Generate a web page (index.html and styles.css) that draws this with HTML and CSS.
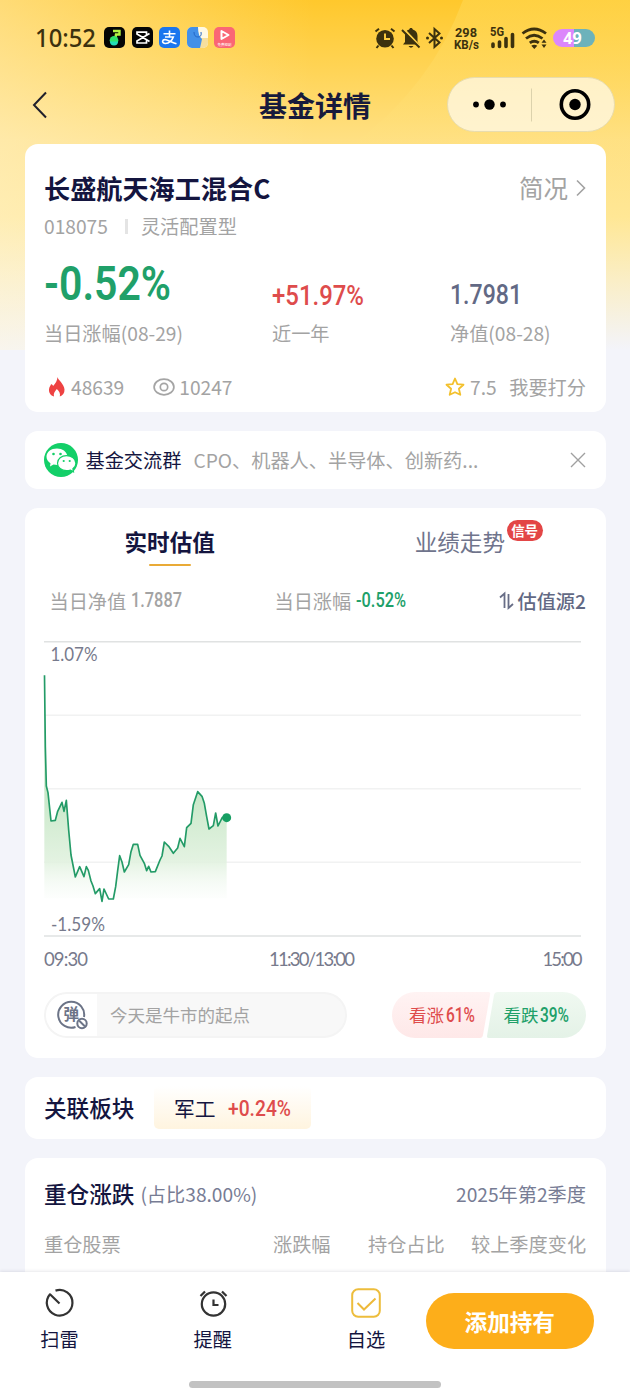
FILE: index.html
```
<!DOCTYPE html>
<html lang="zh-CN">
<head>
<meta charset="utf-8">
<title>基金详情</title>
<link rel="stylesheet" href="styles.css">
</head>
<body>
<svg class="backdrop" viewBox="0 0 630 350" width="630" height="350">
  <defs>
    <linearGradient id="bgv" x1="0" y1="0" x2="0" y2="1">
      <stop offset="0" stop-color="#ffc82c"/><stop offset=".2" stop-color="#ffd456"/><stop offset=".4" stop-color="#ffe083"/><stop offset=".62" stop-color="#ffe795"/><stop offset=".8" stop-color="#faeec6"/><stop offset="1" stop-color="#f3f4fa"/>
    </linearGradient>
    <linearGradient id="bgl" x1="0" y1="0" x2="1" y2="0">
      <stop offset="0" stop-color="#fff6dd" stop-opacity=".42"/><stop offset=".5" stop-color="#fff6dd" stop-opacity="0"/>
    </linearGradient>
    <linearGradient id="bgc" x1="0" y1="0" x2="0" y2="1">
      <stop offset="0" stop-color="#ffe16a" stop-opacity=".36"/><stop offset="1" stop-color="#ffe58a" stop-opacity=".05"/>
    </linearGradient>
  </defs>
  <rect width="630" height="350" fill="url(#bgv)"/>
  <rect width="630" height="350" fill="url(#bgl)"/>
  <path d="M463 0 Q432 85 355 143 V200 H630 V0Z" fill="url(#bgc)"/>
</svg>

<header class="status">
  <svg class="clock" width="62" height="28"><text x="0" y="22.500" textLength="61" lengthAdjust="spacingAndGlyphs">10:52</text></svg>
  <div class="apps">
    <svg viewBox="0 0 21 21"><rect width="21" height="21" rx="5" fill="#050505"/><path d="M9 4h6.500v3.500H12l-.5 3" fill="none" stroke="#b4f442" stroke-width="2.400"/><circle cx="10" cy="13.300" r="4.300" fill="#2ee36b"/><path d="M6 14.500h8a4 4 0 0 1-8 0z" fill="#22dcb8"/></svg>
    <svg viewBox="0 0 21 21"><rect width="21" height="21" rx="5" fill="#050505"/><path d="M17.500 6.500 5 14v2h9.500v-2.500M17.500 14.500 5 7V5.200h9.500v2.500" fill="none" stroke="#fff" stroke-width="1.700"/></svg>
    <svg viewBox="0 0 21 21"><rect width="21" height="21" rx="5" fill="#1b76ee"/><path d="M4.500 6.700h12M10.500 3.500V10M6 10h8.300c-1 3-4 6.500-7.800 6.500-4.500-.3-3.300-4.500.5-3.700 3 .7 6 2.500 10.500 4" fill="none" stroke="#fff" stroke-width="1.600"/></svg>
    <svg viewBox="0 0 21 21"><rect width="21" height="21" rx="5" fill="#fff9e4"/><path d="M13 11h8v5a5 5 0 0 1-5 5h-3z" fill="#f6df9e"/><path d="M5 0h6q0 9 4 12-1 5-2 9H5a5 5 0 0 1-5-5V5a5 5 0 0 1 5-5z" fill="#4390e8"/><path d="M7 5q0 5 4 5t3-5" fill="none" stroke="#2467c8" stroke-width="1"/></svg>
    <svg viewBox="0 0 21 21"><rect width="21" height="21" rx="5" fill="#fa6675"/><path d="M7.500 4v8l7-4z" fill="none" stroke="#fff" stroke-width="2" stroke-linejoin="round"/><text class="app-caption" x="3.500" y="19">免费短剧</text></svg>
  </div>
  <div class="signals">
    <svg width="22" height="22" viewBox="0 0 22 22"><circle cx="11" cy="11.800" r="8.800" fill="#3c310e"/><path d="M11 6.500V12h5" fill="none" stroke="#ffce40" stroke-width="1.900"/><path d="M1.500 4.500 5 1.700M20.500 4.500 17 1.700M4.500 18.500l-2 2.500M17.500 18.500l2 2.500" stroke="#3c310e" stroke-width="2"/></svg>
    <svg width="20" height="22" viewBox="0 0 20 22"><path d="M10 1c1 0 1.700.7 1.800 1.600 3 .8 4.700 3.300 4.700 6.400v6l2 2.500H2L4 15V9c0-3.300 1.500-5.600 4.200-6.400C8.300 1.700 9 1 10 1zM7.500 19h5q-2.500 3.500-5 0z" fill="#3c310e"/><path d="m2.500 1.800 17 18" stroke="#ffd149" stroke-width="2"/><path d="m1 3 17.500 17.500" stroke="#3c310e" stroke-width="1.900"/></svg>
    <svg width="19" height="22" viewBox="0 0 19 22"><path d="m4 6 10.500 9.500L9.500 20V2l5 4.500L4 16" fill="none" stroke="#3c310e" stroke-width="2"/><circle cx="2.500" cy="11" r="1.500" fill="#3c310e"/><circle cx="16.500" cy="11" r="1.500" fill="#3c310e"/></svg>
    <svg class="tiny rate" width="25" height="26"><text x="1" y="11.500" textLength="22" lengthAdjust="spacingAndGlyphs">298</text><text x="0" y="23.500" textLength="25" lengthAdjust="spacingAndGlyphs">KB/s</text></svg>
    <svg class="tiny cell" width="26" height="26"><text x="0" y="11" textLength="14" lengthAdjust="spacingAndGlyphs">5G</text><path d="M3 19v2.500M9.500 17v4.500M16 13.500v8M22.500 9.500v12" stroke="#3c310e" stroke-width="3.600" stroke-linecap="round"/></svg>
    <svg class="wifi" width="27" height="22" viewBox="0 0 27 22"><g fill="none" stroke="#3c310e" stroke-width="2.800"><path d="M1.500 6.500q11.500-9 23.500 0M5 11.500q8-6.500 16.500 0M8.800 15.900q4.500-3.400 9 0"/></g><path d="m10.300 18.700 3 3.300 3-3.300q-3-2-6 0zM20.500 15.800h5L23 12.500zM20.500 17.500h5L23 21z" fill="#3c310e"/></svg>
    <span class="battery">49</span>
  </div>
</header>

<nav class="nav">
  <svg class="back" width="16" height="28" viewBox="0 0 16 28"><path d="M14 1.500 2 14l12 12.500" fill="none" stroke="#20202c" stroke-width="2"/></svg>
  <h1>基金详情</h1>
  <div class="capsule">
    <svg width="167" height="54" viewBox="0 0 167 54"><circle cx="28" cy="26.500" r="2.900"/><circle cx="41.500" cy="26.500" r="5.200"/><circle cx="55" cy="26.500" r="2.900"/><path d="M83.500 10.500v33" stroke="#dcd2ac"/><circle cx="127" cy="26.500" r="13.700" fill="none" stroke="#000" stroke-width="3.600"/><circle cx="127" cy="26.500" r="5.700"/></svg>
  </div>
</nav>

<main class="page">
  <section class="card summary">
    <div class="name-row"><h2>长盛航天海工混合C</h2><span class="brief">简况<svg width="10" height="18" viewBox="0 0 10 18"><path d="m1 1.500 7.500 7.500L1 16.500" fill="none" stroke="#a2a2a2" stroke-width="1.600"/></svg></span></div>
    <div class="meta-row"><span>018075</span><i></i><span>灵活配置型</span></div>
    <div class="figures">
      <svg class="din" width="180" height="66"><text class="green big" x="0" y="55.500" textLength="127" lengthAdjust="spacingAndGlyphs">-0.52%</text></svg>
      <svg class="din" width="150" height="66"><text class="red mid" x="0" y="60.500" textLength="92" lengthAdjust="spacingAndGlyphs">+51.97%</text></svg>
      <svg class="din" width="120" height="66"><text class="slate mid" x="0" y="60" textLength="72" lengthAdjust="spacingAndGlyphs">1.7981</text></svg>
    </div>
    <div class="figures labels"><span>当日涨幅(08-29)</span><span>近一年</span><span>净值(08-28)</span></div>
    <div class="counts">
      <svg width="20" height="22" viewBox="0 0 20 22"><path d="M10.500 1c.5 3 6.800 7 7 12.500.2 3.500-1.800 6-4.700 7 .8-3-.5-5-3-7.500-2.300 2.700-3.500 4.500-2.800 7.500-3.500-1-5.300-4-5-7 .2-2.500 1.500-3.500 2.200-5.500.9.500 1.500 1 1.900 2C8.500 7.500 10.300 4.500 10.500 1z" fill="#ee4242"/></svg>
      <span class="hot">48639</span>
      <svg width="22" height="18" viewBox="0 0 22 18"><ellipse cx="11" cy="9" rx="9.900" ry="7.800" fill="none" stroke="#a5a5a5" stroke-width="1.700"/><circle cx="11" cy="9" r="3.700" fill="none" stroke="#a5a5a5" stroke-width="1.700"/></svg>
      <span class="views">10247</span>
      <svg class="star" width="20" height="20" viewBox="0 0 20 20"><path d="m10 1.500 2.400 5.600 6.100.6-4.600 4 1.400 6.100L10 15.200l-5.300 2.600 1.400-6.100-4.600-4 6.100-.6z" fill="none" stroke="#f3c02c" stroke-width="1.800" stroke-linejoin="round"/></svg>
      <span class="score">7.5</span><span>我要打分</span>
    </div>
  </section>

  <section class="card group">
    <svg width="34" height="34" viewBox="0 0 34 34"><circle cx="17" cy="17" r="17" fill="#13cf68"/><path d="M13 5.500C7 5.500 2.500 9 2.500 13.800c0 2.800 1.700 5 4 6.500L6 23.500l3.500-2q5 1.200 8.500-.5 6-2.300 5.500-8C22.500 8.500 18.500 5.500 13 5.500z" fill="#fff"/><path d="M22.500 12.700c-5 0-9 3.200-9 7.500s4 7.500 9 7.500q2 0 4-.6l3 1.700-.6-3c1.900-1.400 3-3.300 3-5.600 0-4.300-4.400-7.500-9.400-7.500z" fill="#fff" stroke="#13cf68" stroke-width="1.200"/><g fill="#13cf68"><circle cx="9.500" cy="11" r="1.300"/><circle cx="16.500" cy="11" r="1.300"/><circle cx="19.700" cy="18" r="1.100"/><circle cx="25.700" cy="18" r="1.100"/></g></svg>
    <b>基金交流群</b><span>CPO、机器人、半导体、创新药...</span>
    <svg class="close" width="16" height="16" viewBox="0 0 16 16"><path d="m1 1 14 14M15 1 1 15" stroke="#a0a0a0" stroke-width="1.400"/></svg>
  </section>

  <section class="card valuation">
    <div class="tabs">
      <span class="tab active">实时估值</span>
      <span class="tab">业绩走势<em>信号</em></span>
    </div>
    <div class="stats">
      <span class="stat-a">当日净值<svg class="din" width="56" height="24"><text class="grey small" x="0" y="18" textLength="51" lengthAdjust="spacingAndGlyphs">1.7887</text></svg></span>
      <span class="stat-b">当日涨幅<svg class="din" width="56" height="24"><text class="green small" x="0" y="18" textLength="50" lengthAdjust="spacingAndGlyphs">-0.52%</text></svg></span>
      <span class="source"><svg width="15" height="18" viewBox="0 0 15 18"><path d="M1 5.500 5.500 1.500v14.500M9.500 2v14L14 12" fill="none" stroke="#676d86" stroke-width="1.800"/></svg>估值源2</span>
    </div>
    <svg class="chart" width="542" height="335" viewBox="44 640 542 335">
      <defs><linearGradient id="area" gradientUnits="userSpaceOnUse" x1="0" y1="480" x2="0" y2="805"><stop offset="0" stop-color="#c6e7c6"/><stop offset=".65" stop-color="#e0f1de" stop-opacity=".9"/><stop offset="1" stop-color="#f6fbf6" stop-opacity=".25"/></linearGradient></defs>
      <path d="M44 715.300h537M44 788.700h537M44 862.300h537" stroke="#f1f2f2" stroke-width="1.500"/>
      <path d="M44 641.800h537M44 936h537" stroke="#e0e2e2" stroke-width="1.500"/>
      <g transform="translate(30 630) scale(.33333)">
        <path d="M43 136 46 350 49 468 54 488 63 573 76 571 83 544 96 517 102 544 109 511 116 600 123 675 136 741 149 710 162 740 169 710 175 721 183 753 189 768 196 791 209 776 216 805 222 777 236 805 250 805 257 770 263 722 269 677 276 696 283 726 296 704 303 665 310 643 323 643 330 676 343 700 350 722 356 709 363 726 376 725 390 690 396 678 403 636 416 649 430 670 443 654 450 625 463 650 470 593 483 580 490 524 503 485 516 499 523 520 530 560 537 597 550 587 557 549 564 588 577 562 590 563V805H43Z" fill="url(#area)"/>
        <polyline points="43.500,136 46,350 49,468 54,488 63,573 76,571 83,544 96,517 102,544 109,511 116,600 123,675 136,741 149,710 162,740 169,710 175,721 183,753 189,768 196,791 209,776 216,814 222,777 236,807 250,807 257,770 263,722 269,677 276,696 283,726 296,704 303,665 310,643 323,643 330,676 343,700 350,722 356,709 363,726 376,725 390,690 396,678 403,636 416,649 430,670 443,654 450,625 463,650 470,593 483,580 490,524 503,485 516,499 523,520 530,560 537,597 550,587 557,549 564,588 577,562 590,563" fill="none" stroke="#239b67" stroke-width="5" stroke-linejoin="round"/>
        <circle cx="590" cy="563" r="13.500" fill="#179f63"/>
      </g>
      <g class="axis">
        <text x="50.500" y="661" textLength="47" lengthAdjust="spacingAndGlyphs">1.07%</text>
        <text x="51" y="930.500" textLength="54" lengthAdjust="spacingAndGlyphs">-1.59%</text>
        <text x="44" y="965.500" textLength="44">09:30</text>
        <text x="269" y="965.500" textLength="86">11:30/13:00</text>
        <text x="542.500" y="965.500" textLength="40">15:00</text>
      </g>
    </svg>
    <div class="talk">
      <div class="bubble">
        <span class="toggle"><svg width="32" height="30" viewBox="0 0 32 30"><path d="M28 17A13 13 0 1 0 19.500 27" fill="none" stroke="#6c7487" stroke-width="2"/><text x="7.500" y="20">弹</text><circle cx="26" cy="23.500" r="4.700" fill="#fff" stroke="#6c7487" stroke-width="2"/><path d="m23 20.500 6 6" stroke="#6c7487" stroke-width="2"/></svg></span>
        <span class="hint">今天是牛市的起点</span>
      </div>
      <svg class="vote din" width="194" height="46" viewBox="0 0 194 46">
        <defs><linearGradient id="up" x2="0" y2="1"><stop stop-color="#fff3f3"/><stop offset="1" stop-color="#fee8e8"/></linearGradient><linearGradient id="down" x2="0" y2="1"><stop stop-color="#f0f9f1"/><stop offset="1" stop-color="#e4f2e7"/></linearGradient></defs>
        <path d="M23 0h73.500q2 0 1.700 2L91 43q-.5 3-3 3H23a23 23 0 0 1 0-46z" fill="url(#up)"/>
        <path d="M106 0h65a23 23 0 0 1 0 46H97q-2.300 0-2-2l7-41q.7-3 4-3z" fill="url(#down)"/>
        <text class="cjk red" x="17" y="29.500">看涨</text><text class="vnum red" x="54" y="29.500" textLength="29" lengthAdjust="spacingAndGlyphs">61%</text>
        <text class="cjk green" x="111.500" y="29.500">看跌</text><text class="vnum green" x="148" y="29.500" textLength="29" lengthAdjust="spacingAndGlyphs">39%</text>
      </svg>
    </div>
  </section>

  <section class="card sector">
    <h3>关联板块</h3>
    <div class="chip"><span>军工</span><svg class="din" width="66" height="26"><text class="red chipnum" x="0" y="20.500" textLength="63" lengthAdjust="spacingAndGlyphs">+0.24%</text></svg></div>
  </section>

  <section class="card holdings">
    <div class="hold-title"><h3>重仓涨跌</h3><span class="share">(占比38.00%)</span><span class="quarter">2025年第2季度</span></div>
    <div class="hold-head"><span>重仓股票</span><span>涨跌幅</span><span>持仓占比</span><span>较上季度变化</span></div>
  </section>
</main>

<footer class="bar">
  <div class="actions">
    <div class="action"><svg width="30" height="30" viewBox="0 0 30 30"><path d="M11.500 2.600A12.800 12.800 0 1 1 6 6.300L15.500 15.500" fill="none" stroke="#333" stroke-width="2.200" stroke-linejoin="round"/></svg><span>扫雷</span></div>
    <div class="action"><svg width="30" height="30" viewBox="0 0 30 30"><circle cx="15.500" cy="16" r="11.700" fill="none" stroke="#333" stroke-width="2.200"/><path d="M15.500 11.500V17h5M2.500 8 7 3.500M28.500 8 24 3.500" fill="none" stroke="#333" stroke-width="2.200"/></svg><span>提醒</span></div>
    <div class="action"><svg width="30" height="30" viewBox="0 0 30 30"><rect x="1.200" y="1.200" width="27.600" height="27.600" rx="6" fill="none" stroke="#edbd3c" stroke-width="2"/><path d="m6.500 15 6.500 6.500 11.500-11" fill="none" stroke="#edb93a" stroke-width="2"/></svg><span>自选</span></div>
    <button class="add">添加持有</button>
  </div>
  <div class="home"></div>
</footer>
</body>
</html>
```
FILE: styles.css
```
* { box-sizing: border-box; margin: 0; padding: 0; }
html, body { width: 630px; height: 1400px; overflow: hidden; }
body { background: #f3f4fa; color: #14153f; font-family: "Noto Sans CJK SC", sans-serif; font-size: 19.2px; font-weight: 400; position: relative; }
svg { display: block; flex: none; overflow: visible; }
h1, h2, h3 { white-space: nowrap; }
.backdrop { position: absolute; left: 0; top: 0; z-index: -1; }

/* status bar */
.status { height: 74px; padding: 1px 35px 0; display: flex; align-items: center; }
.clock text { font: 500 24.500px "Noto Sans", sans-serif; fill: #3c310e; }
.apps { display: flex; gap: 6.500px; margin-left: 7px; }
.apps svg { width: 21px; height: 21px; }
.app-caption { font-size: 3.500px; fill: #fff; }
.signals { display: flex; align-items: center; margin-left: auto; }
.signals svg:nth-child(2) { margin-left: 5px; }
.signals svg:nth-child(3) { margin-left: 4px; }
.tiny text { font: 700 12.300px Roboto, sans-serif; fill: #3c310e; }
.rate { margin-left: 10px; }
.cell { margin-left: 11px; }
.wifi { margin-left: 5px; }
.battery { width: 42px; height: 18px; margin-left: 5px; border-radius: 9px; background: linear-gradient(90deg, #dc87fb 49%, #6db2bb 51%); color: #fff; font: 700 16px/18px "Noto Sans", sans-serif; text-align: center; padding-right: 3px; }

.nav { height: 69.500px; display: flex; justify-content: space-between; padding: 0 15px 0 32px; }
.back { margin-top: 16.500px; }
.nav h1 { font-size: 28px; line-height: 40px; font-weight: 700; margin: 11px 0 0 135px; color: #171a3c; }
.capsule { width: 168px; height: 55px; margin-top: 3px; border-radius: 28px; border: 1px solid #e8dcae; background: rgba(255,250,235,.74); }

.page { padding: 0 24.500px; display: flex; flex-direction: column; gap: 19px; }
.card { background: #fff; border-radius: 13px; padding: 0 19.500px; flex: none; }

/* fund summary */
.summary { height: 268.500px; padding-top: 24px; color: #a3a3a3; }
.name-row { display: flex; height: 40px; align-items: center; justify-content: space-between; }
.name-row h2 { font-size: 26.150px; font-weight: 700; color: #14153f; }
.brief { display: flex; align-items: center; gap: 8px; font-size: 24.500px; }
.meta-row { display: flex; align-items: center; height: 36px; padding-top: 1px; }
.meta-row i { width: 3px; height: 15px; background: #e4e4e4; margin: 0 13px 0 17px; }
.figures { display: grid; grid-template-columns: 228px 178px 1fr; height: 66px; }
.labels { height: 46px; align-items: center; }
.counts { display: flex; align-items: center; height: 57px; padding: 5px 0 0 3px; }
.hot { margin: 0 29px 0 4px; }
.views { margin-left: 4px; }
.star { margin-left: auto; }
.score { margin: 0 12.500px 0 5px; }

.din text { font-family: Roboto, sans-serif; font-weight: 500; }
.din .big { font-size: 48.500px; font-weight: 600; }
.din .mid { font-size: 28px; }
.din .small { font-size: 19.500px; }
.din .chipnum { font-size: 22.500px; }
.green { fill: #20a069; }
.red { fill: #de4c4c; }
.slate { fill: #626984; }
.grey { fill: #a3a3a3; }

.group { height: 58px; display: flex; align-items: center; color: #a3a3a3; }
.group > svg:first-child { margin-left: -.5px; }
.group b { font-weight: 400; color: #14153f; margin: 0 12px 0 8px; }
.close { margin-left: auto; }

/* live valuation */
.valuation { height: 549.500px; }
.tabs { height: 68px; display: flex; justify-content: space-between; padding: 0 81px 0 80.500px; }
.tab { position: relative; font-size: 22.600px; line-height: 67px; color: #6f748c; }
.active { font-weight: 700; color: #14153f; }
.active::after { content: ""; position: absolute; left: 24px; top: 56px; width: 42px; height: 2px; border-radius: 1px; background: #e9aa36; }
.tab em { position: absolute; left: 92px; top: 12px; width: 36px; height: 21px; border-radius: 10.500px; background: #e34646; color: #fff; font-size: 13.500px; font-style: normal; font-weight: 700; line-height: 20px; text-align: center; }
.stats { display: flex; align-items: center; height: 50px; padding-left: 5.500px; color: #a3a3a3; }
.stats span { display: flex; align-items: center; }
.stats .din { margin-left: 5px; }
.stat-a { width: 225px; }
.stats .source { margin-left: auto; gap: 4px; color: #626984; font-weight: 500; }
.chart { margin-top: 14px; }
.axis text { font: 400 18.500px Lato, sans-serif; fill: #777a8c; }
.talk { display: flex; justify-content: space-between; margin-top: 17px; }
.bubble { display: flex; width: 303px; height: 46px; border: 2px solid #f4f4f4; border-radius: 23px; background: #f8f8f8; overflow: hidden; }
.toggle { width: 51px; background: #fff; padding: 6px 0 0 9.500px; }
.toggle text { font-size: 15.500px; font-weight: 700; fill: #6c7487; }
.hint { margin-left: 13px; font-size: 17.500px; line-height: 42px; color: #a3a3a3; }
.vote .cjk { font-family: "Noto Sans CJK SC", sans-serif; font-size: 17.500px; font-weight: 400; }
.vote .vnum { font-size: 20px; }

.sector { height: 62px; display: flex; align-items: center; }
h3 { font-size: 22.600px; font-weight: 500; }
.chip { display: flex; align-items: center; width: 157px; height: 43px; margin-left: 19.500px; padding-left: 20px; gap: 13px; border-radius: 5px; background: linear-gradient(#fff, #fff4df); font-size: 20.800px; }

.holdings { height: 160px; padding-top: 12px; }
.hold-title { display: flex; align-items: center; height: 48px; color: #777c94; }
.hold-title h3 { color: #14153f; }
.share { margin-left: 6px; }
.quarter { margin-left: auto; }
.hold-head { display: grid; grid-template-columns: 229px 95px 103px 1fr; height: 52px; align-items: center; color: #a3a3a3; white-space: nowrap; }

/* bottom actions */
.bar { position: absolute; left: 0; bottom: 0; width: 630px; height: 128px; background: #fff; box-shadow: 0 -1px 3px rgba(30,30,60,.1); display: flex; flex-direction: column; align-items: center; }
.actions { width: 630px; height: 109px; display: flex; padding: 16px 36px 0 29px; }
.action { width: 61px; margin-right: 92.300px; display: flex; flex-direction: column; align-items: center; line-height: 28px; gap: 7px; }
.action:nth-child(3) { margin-right: 29px; }
.add { width: 168.500px; height: 56px; margin-top: 4.500px; border: 0; border-radius: 28px; background: #fdae1a; color: #fff; font: 700 22.600px/56px "Noto Sans CJK SC", sans-serif; padding-top: 1.500px; }
.home { width: 252px; height: 7px; border-radius: 4px; background: #c2c2c2; }
```
